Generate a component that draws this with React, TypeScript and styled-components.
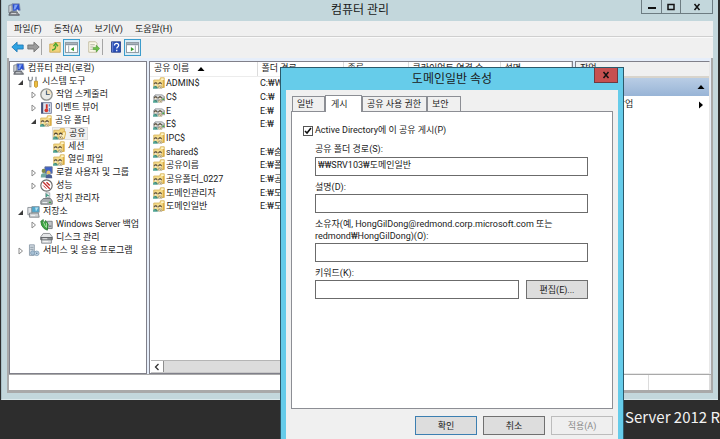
import React, { ReactNode, useState } from "react";
import styled, { createGlobalStyle, css } from "styled-components";

const GlobalStyle = createGlobalStyle`
  * { box-sizing: border-box; }
  body {
    margin: 0;
    background: #2d2d2d;
    color: #1a1a1a;
    font-family: Roboto, "Noto Sans CJK KR", sans-serif;
    font-size: 9px;
    line-height: 13px;
  }
  button, input { font: inherit; color: inherit; }
`;

/* ---------- desktop and main window ---------- */

const Desktop = styled.main`
  position: relative;
  display: flex;
  flex-direction: column;
  height: 100vh;
  overflow: hidden;
  background: #2d2d2d;
`;

const ConsoleWindow = styled.section`
  display: flex;
  flex-direction: column;
  flex: 1;
  margin: 0 2px 0 1px;
  padding: 0 5px 6px;
  background: #c3d7dc;
  border-left: 1px solid #a9bfc6;
  border-bottom: 1px solid #dbe9ec;
  min-height: 0;
`;

const TitleBar = styled.header`
  display: grid;
  grid-template-columns: 1fr auto 1fr;
  height: 21px;
`;

const TitleIcon = styled.div`
  padding: 3px 0 0 1px;
`;

const WindowTitle = styled.h1`
  margin: 0;
  font-size: 12px;
  font-weight: 400;
  line-height: 20px;
`;

const CaptionButtons = styled.div`
  display: flex;
  justify-self: end;
  height: 14px;
  border: 1px solid #6d7c82;
  border-top: 0;
`;

const CaptionButton = styled.button<{ $wide?: boolean }>`
  display: flex;
  align-items: center;
  justify-content: center;
  width: ${(p) => (p.$wide ? 32 : 19)}px;
  padding: 0;
  border: 0;
  background: transparent;
  & + & { border-left: 1px solid #6d7c82; }
`;

const MenuBar = styled.nav`
  display: flex;
  gap: 12px;
  height: 16px;
  padding-left: 7px;
  background: #f0f0f0;
  border-bottom: 1px solid #cfcfcf;
`;

const MenuItem = styled.button`
  padding: 0;
  border: 0;
  background: none;
  line-height: 14px;
`;

const Toolbar = styled.div`
  display: flex;
  align-items: center;
  height: 21px;
  padding: 0 0 2px 2px;
  background: #f0f0f0;
  border-top: 1px solid #fafafa;
`;

const ToolButton = styled.button<{ $active?: boolean }>`
  display: flex;
  align-items: center;
  justify-content: center;
  width: ${(p) => (p.$active ? 17 : 16)}px;
  height: ${(p) => (p.$active ? 17 : 16)}px;
  padding: 0;
  border: ${(p) => (p.$active ? "1px solid #3c9ccc" : "0")};
  background: ${(p) => (p.$active ? "#d9ecf6" : "none")};
`;

const ToolSeparator = styled.span<{ $blank?: boolean }>`
  width: 1px;
  height: 16px;
  margin-right: 5px;
  background: ${(p) => (p.$blank ? "none" : "#a5a5a5")};
`;

const ClientArea = styled.div`
  display: flex;
  flex-direction: column;
  flex: 1;
  min-height: 0;
  padding: 0 2px 3px;
  background: #a9a9a9;
`;

const Panes = styled.div`
  display: grid;
  grid-template-columns: 138px 1fr 135px;
  gap: 2px;
  flex: 1;
  min-height: 0;
  padding: 3px 1px 0 0;
  background: #e6eefa;
`;

const paneBox = css`
  min-width: 0;
  min-height: 0;
  overflow: hidden;
  background: #fff;
  border: 1px solid #80808a;
`;

const TreePane = styled.ul`
  ${paneBox}
  margin: 0;
  padding: 0;
  list-style: none;
`;

const TreeRow = styled.li<{ $level: number }>`
  display: flex;
  align-items: center;
  height: 13px;
  padding-left: ${(p) => (p.$level === 0 ? 2 : p.$level * 13 - 7)}px;
  white-space: nowrap;
`;

const Expander = styled.span`
  display: flex;
  justify-content: center;
  width: 8px;
  margin-right: 2px;
`;

const TreeItem = styled.span<{ $selected?: boolean }>`
  display: flex;
  align-items: center;
  gap: 3px;
  height: 13px;
  padding: 0 2px 0 1px;
  background: ${(p) => (p.$selected ? "#f0f0f0" : "none")};
  box-shadow: ${(p) => (p.$selected ? "inset 0 0 0 1px #dedede" : "none")};
`;

const ListPane = styled.div`
  ${paneBox}
  display: flex;
  flex-direction: column;
  justify-content: space-between;
`;

const ShareTable = styled.table`
  table-layout: fixed;
  width: 100%;
  border-collapse: collapse;
  white-space: nowrap;

  th {
    height: 14px;
    padding: 0 0 0 4px;
    font-weight: 400;
    text-align: left;
    overflow: hidden;
    border-right: 1px solid #dcdcdc;
    border-bottom: 1px solid #ececec;
  }
  td {
    height: 14px;
    padding: 0 0 0 3px;
    overflow: hidden;
  }
  tbody tr:nth-child(3n) td { height: 13px; line-height: 12px; }
`;

const Column = styled.col<{ $width?: number }>`
  width: ${(p) => (p.$width ? `${p.$width}px` : "auto")};
`;

const Inline = styled.span<{ $gap: number }>`
  display: flex;
  align-items: center;
  gap: ${(p) => p.$gap}px;
`;

const ScrollBar = styled.div`
  display: flex;
  height: 13px;
  margin-left: 1px;
  background: #dcdcdc;
  border-top: 1px solid #b5b5b5;
  border-bottom: 1px solid #c8c8c8;
`;

const ScrollButton = styled.button`
  display: flex;
  align-items: center;
  justify-content: center;
  width: 13px;
  padding: 0;
  background: #fff;
  border: 0;
  border-right: 1px solid #8d8d8d;
`;

const ActionPane = styled.aside`
  ${paneBox}
  border-right-color: #e8e8e8;
  border-bottom-color: #e8e8e8;
`;

const ActionHeader = styled.h2`
  height: 16px;
  margin: 0;
  padding-left: 4px;
  font-size: inherit;
  font-weight: 400;
  background: #f0f0f0;
  border-bottom: 2px solid #d8d4cc;
`;

const ActionGroup = styled.div`
  display: flex;
  align-items: center;
  justify-content: space-between;
  height: 18px;
  padding: 0 4px;
  background: linear-gradient(#b9cde5, #98b4d6);
`;

const ActionLink = styled.button`
  display: flex;
  align-items: center;
  justify-content: space-between;
  width: 100%;
  height: 17px;
  padding: 0 4px 0 22px;
  border: 0;
  background: none;
`;

const StatusBar = styled.footer`
  display: grid;
  grid-template-columns: 1fr 61px 1px;
  height: 16px;
  background: #fff;
  border-top: 1px solid #a9a9a9;
  span { border-right: 1px solid #dcdcdc; }
`;

const Branding = styled.div`
  flex: none;
  display: flex;
  justify-content: flex-end;
  height: 39px;
  color: #f2f2f2;
  font-family: "Noto Sans CJK KR", sans-serif;
  font-size: 15px;
  line-height: 34px;
  white-space: nowrap;
`;

/* ---------- properties dialog ---------- */

const Dialog = styled.section`
  position: absolute;
  top: 67px;
  left: 280px;
  display: flex;
  flex-direction: column;
  width: 344px;
  padding: 0 5px 5px;
  background: #66ccea;
  border: 1px solid #2c5a6b;
`;

const DialogTitleBar = styled.header`
  display: grid;
  grid-template-columns: 24px 1fr 24px;
  height: 22px;
`;

const DialogTitle = styled.h2`
  margin: 0;
  font-size: 12px;
  font-weight: 400;
  line-height: 22px;
  text-align: center;
`;

const CloseButton = styled.button`
  display: flex;
  align-items: center;
  justify-content: center;
  height: 15px;
  padding: 0;
  background: #c75050;
  border: 1px solid #6f3a41;
  border-top: 0;
`;

const DialogBody = styled.div`
  padding: 5px 5px 4px;
  background: #f0f0f0;
  border-bottom: 1px solid #fff;
`;

const TabList = styled.div`
  display: flex;
  align-items: flex-end;
  padding-left: 1px;
`;

const Tab = styled.button<{ $width: number; $selected?: boolean }>`
  width: ${(p) => p.$width}px;
  height: ${(p) => (p.$selected ? 17 : 15)}px;
  margin-bottom: ${(p) => (p.$selected ? -1 : 0)}px;
  padding: 0 0 0 ${(p) => (p.$selected ? 5 : 4)}px;
  text-align: left;
  white-space: nowrap;
  line-height: 13px;
  background: ${(p) => (p.$selected ? "#fff" : "#f0f0f0")};
  border: 1px solid #8c8e94;
  border-bottom: 0;
`;

const TabPage = styled.form`
  display: flex;
  flex-direction: column;
  height: 298px;
  padding: 12px 24px 0 11px;
  background: #fff;
  border: 1px solid #8c8e94;
`;

const CheckLabel = styled.label`
  display: flex;
  align-items: center;
  gap: 2px;
  height: 13px;
`;

const CheckBox = styled.input`
  appearance: none;
  width: 10px;
  height: 10px;
  margin: 0;
  border: 1px solid #555;
  background: #fff;
  &:checked {
    background: #fff
      url("data:image/svg+xml,%3Csvg xmlns='http://www.w3.org/2000/svg' viewBox='0 0 8 8'%3E%3Cpath d='M1 4l2 2 4-5' fill='none' stroke='%23111' stroke-width='1.6'/%3E%3C/svg%3E");
  }
`;

const Fields = styled.div`
  display: flex;
  flex-direction: column;
  padding: 6px 0 0 12px;
`;

const FieldLabel = styled.label<{ $first?: boolean }>`
  margin-top: ${(p) => (p.$first ? 0 : 5)}px;
  margin-bottom: ${(p) => (p.$first ? 2 : 1)}px;
  line-height: 12px;
  white-space: pre-line;
`;

const TextBox = styled.input`
  flex: 1;
  width: 100%;
  min-width: 0;
  min-height: 19px;
  padding: 0 2px 3px;
  background: #fff;
  border: 1px solid #6b6b6b;
`;

const FieldRow = styled.div`
  display: flex;
  gap: 7px;
  align-items: flex-end;
`;

const PushButton = styled.button<{ $default?: boolean }>`
  width: 62px;
  height: 19px;
  padding: 0;
  line-height: 14px;
  background: #dddddd;
  border: 1px solid ${(p) => (p.$default ? "#3c7fb1" : "#707070")};
  &:disabled {
    color: #8a8a8a;
    background: #efefef;
    border-color: #bcbcbc;
  }
`;

const DialogActions = styled.div`
  display: flex;
  justify-content: flex-end;
  gap: 6px;
  padding-top: 7px;
`;

/* ---------- icons ---------- */

const Svg = ({ size = 12, children }: { size?: number; children: ReactNode }) => (
  <svg width={size} height={size} viewBox="0 0 16 16" aria-hidden="true">
    {children}
  </svg>
);

const people = (
  <>
    <path d="M0 15.500c0-3 1-4 3-4s3 1 3.500 4z" fill="#4fa596" />
    <path d="M7 15c0-2.500.5-3.500 2.500-3.500S12 12.500 12 15z" fill="#f4e6bd" stroke="#7d6d48" strokeWidth=".6" />
    <path d="M1.500 9.500a2 2.200 0 0 1 4.200 0M7.300 9.500a2 2.200 0 0 1 4.200 0" fill="#4d4130" stroke="#4d4130" strokeWidth=".8" />
    <circle cx="3.6" cy="10" r="1.4" fill="#f6ead0" />
    <circle cx="9.4" cy="10" r="1.4" fill="#f6ead0" />
    <path d="M3.500 12.500l1 1.500M9 12.500l1 1.500" stroke="#4d4130" />
  </>
);

const SharedFolderIcon = () => (
  <Svg>
    <path d="M1 4h8l1-3h5v13H1z" fill="#f5dc8c" stroke="#d3ad52" />
    <path d="M11 2h3v2h-3z" fill="#fff6d2" />
    <path d="M14 4v10" stroke="#dcae45" strokeWidth="2" />
    {people}
  </Svg>
);

const OpenSharedFolderIcon = () => (
  <Svg size={13}>
    <path d="M1 4h7l1-2h5v12H1z" fill="#f3d47c" stroke="#d3ad52" />
    <path d="M9 14l3-8h4l-2 8z" fill="#fdeeb8" stroke="#d7ab48" />
    {people}
  </Svg>
);

const SharedDriveIcon = () => (
  <Svg>
    <path d="M1 7l2-2h9l4 3v5H1z" fill="#b3b7b9" stroke="#8b8f92" strokeWidth=".8" />
    <path d="M4 6h8l2 2H3z" fill="#dfe2e3" />
    <rect x="12.5" y="10" width="2.5" height="2" fill="#46a83a" />
    {people}
  </Svg>
);

const ComputerIcon = ({ size = 12 }: { size?: number }) => (
  <Svg size={size}>
    <path d="M1 3l4-1v10H1z" fill="#c9cdd2" stroke="#737a83" />
    <path d="M5 1h9l1 8-9 1z" fill="#2b4fd0" stroke="#8793a6" />
    <path d="M8 2h4l-3 6H7z" fill="#7fa2f3" />
    <path d="M3 11h9l2 4H1z" fill="#8c8f95" stroke="#4c5057" />
    <path d="M11 8l3 5" stroke="#e8eaed" strokeWidth="1.5" />
    <path d="M4 13h6" stroke="#e6e8ea" />
  </Svg>
);

const ToolsIcon = () => (
  <Svg>
    <path d="M2 1v4l2.500 2L7 5V1" fill="none" stroke="#7c8288" strokeWidth="1.5" />
    <path d="M4.500 6v9" stroke="#7c8288" strokeWidth="2.5" />
    <path d="M4.500 7v7" stroke="#d9dcde" />
    <path d="M12 1v6" stroke="#8f959a" strokeWidth="1.8" />
    <path d="M10 7h4v7l-1 1h-2l-1-1z" fill="#edbf3f" stroke="#b98a1f" />
  </Svg>
);

const ClockIcon = () => (
  <Svg size={13}>
    <circle cx="8" cy="8" r="7" fill="#e9ebe8" stroke="#8f918d" strokeWidth="1.6" />
    <path d="M8 8V2a6 6 0 0 1 6 6z" fill="#f3e3bd" />
    <path d="M8 3v5h4" fill="none" stroke="#53687e" strokeWidth="1.5" />
  </Svg>
);

const EventIcon = () => (
  <Svg>
    <rect x="2" y="1" width="13" height="14" fill="#dfe3ee" stroke="#4d587d" />
    <path d="M3 1v14" stroke="#46507a" strokeWidth="2.5" />
    <path d="M9 3v6" stroke="#cf2f27" strokeWidth="2.5" />
    <circle cx="8.5" cy="11" r="2.5" fill="#d83a2f" />
    <path d="M12.500 3v3M12.500 8v5" stroke="#5e7fc4" strokeWidth="1.5" />
  </Svg>
);

const UsersIcon = () => (
  <Svg size={13}>
    <path d="M6 1h9v8H6z" fill="#3f62c9" stroke="#68748c" />
    <circle cx="4.5" cy="6" r="2.5" fill="#7c8a4e" />
    <path d="M1 14c0-4 1-5 4-5s4 1 4 5z" fill="#6fa8a0" />
    <circle cx="10.5" cy="8" r="2.5" fill="#e6bf63" />
    <path d="M7 15c0-4 1-5 4-5s4 1 4 5z" fill="#4a5f94" />
  </Svg>
);

const PerformanceIcon = () => (
  <Svg size={13}>
    <circle cx="8" cy="8" r="7" fill="#fff" stroke="#6c6c6c" strokeWidth="1.4" />
    <path d="M4 4l8 8M8 4l4 4" stroke="#c42a2a" strokeWidth="1.7" />
    <path d="M4 8l4 4" stroke="#c42a2a" strokeWidth="1.2" />
  </Svg>
);

const DeviceIcon = () => (
  <Svg size={13}>
    <path d="M7 1h5v6H7z" fill="#eef1f2" stroke="#9aa0a5" />
    <path d="M8 6V3l3 2" fill="none" stroke="#4da08b" strokeWidth="1.5" />
    <path d="M1 11l3-3h9l2 3v4H1z" fill="#a8adb1" stroke="#64696e" />
    <path d="M3 13h6" stroke="#eceff1" strokeWidth="1.3" />
    <rect x="11" y="12" width="2.5" height="1.5" fill="#3ca33a" />
  </Svg>
);

const StorageIcon = () => (
  <Svg size={13}>
    <path d="M1 3h5v9H1z" fill="#e2e5e7" stroke="#7f868c" />
    <path d="M6 2h9v7H6z" fill="#4fa9cf" stroke="#7c8c96" />
    <path d="M10 3h4l-3 5z" fill="#b7e2f2" />
    <path d="M3 10h11l1 5H3z" fill="#cfd3d6" stroke="#72787d" />
    <path d="M5 13h5" stroke="#f6f6f6" />
  </Svg>
);

const BackupIcon = () => (
  <Svg size={13}>
    <path d="M9 4h6v9H9z" fill="#c0c5c8" stroke="#6b7176" />
    <path d="M1 4l3-2v5l3-4 3 5-1 7-4-2-3-4z" fill="#3fa845" stroke="#25702c" />
    <path d="M4 5l3 6M8 6v6" stroke="#b9e8b4" />
    <path d="M11 10h3" stroke="#4a4f53" />
  </Svg>
);

const DiskIcon = () => (
  <Svg size={13}>
    <path d="M1 7l3-4h8l3 4v2H1z" fill="#e4e6e7" stroke="#7c8084" />
    <path d="M1 8h14v3H1z" fill="#8a8e91" stroke="#55595d" />
    <path d="M2 11h12v4H2z" fill="#dfe1e3" stroke="#7a7e82" />
    <path d="M4 13h6M3 9.500h6" stroke="#fafafa" />
  </Svg>
);

const ServicesIcon = () => (
  <Svg size={13}>
    <path d="M3 1h6v13H3z" fill="#d5dde4" stroke="#8493a1" />
    <path d="M4 4h4M4 6.500h4" stroke="#7b8a98" />
    <circle cx="7" cy="11" r="2.6" fill="#a6bfd4" stroke="#7f9bb3" />
    <circle cx="12" cy="11.5" r="2.8" fill="#c3d6e6" stroke="#7f9bb3" />
    <circle cx="12" cy="11.5" r="1" fill="#5f7f9b" />
  </Svg>
);

const ArrowIcon = ({ forward }: { forward?: boolean }) => (
  <svg width="13" height="12" viewBox="0 0 16 14" aria-hidden="true">
    <path
      d={forward ? "M15 7L8.500 1v3.500H1v5h7.500V13z" : "M1 7l6.500-6v3.500H15v5H7.500V13z"}
      fill={forward ? "#9b9b9b" : "#2ea3e3"}
      stroke={forward ? "#6d6d6d" : "#1f76b3"}
    />
  </svg>
);

const FolderUpIcon = () => (
  <Svg>
    <path d="M1 4h5l1-2h8v13H1z" fill="#f0d27c" stroke="#c6a04a" />
    <path d="M4 12c3 0 5-2 5-6M6 7l3-4 3 4" fill="none" stroke="#43a52c" strokeWidth="1.8" />
  </Svg>
);

const PaneIcon = ({ right }: { right?: boolean }) => (
  <svg width="13" height="11" viewBox="0 0 16 13" aria-hidden="true">
    <rect x=".5" y=".5" width="15" height="12" fill="#fff" stroke="#7e8890" />
    <path d="M1 2.500h14" stroke="#8c98a3" strokeWidth="2.4" />
    <path d={right ? "M11.500 4v9" : "M4.500 4v9"} stroke="#8c98a3" />
    <path d={right ? "M6 6l4 2.500L6 11z" : "M11 6L7 8.500l4 2.500z"} fill="#3c9a2e" />
  </svg>
);

const ExportIcon = () => (
  <Svg>
    <path d="M1 1h9l2 2v12H1z" fill="#fbf9ea" stroke="#b5ad8c" />
    <path d="M3 5h6M3 8h4M3 11h4" stroke="#9b9b8c" />
    <path d="M7 8.500h4V5.500l4.500 4.500-4.500 4.500v-3H7z" fill="#6cc04a" stroke="#3f8f2a" strokeWidth=".7" />
  </Svg>
);

const HelpIcon = () => (
  <Svg>
    <path d="M2 1h12v14H2z" fill="#2c50b8" stroke="#1a337f" />
    <path d="M3.500 1v14" stroke="#7f98e0" />
    <path d="M6 6c0-4 6-3.500 5.500 0C11.300 8 9 8 9 10M9 11.500v2" fill="none" stroke="#fff" strokeWidth="1.7" />
  </Svg>
);

const ExpanderGlyph = ({ open }: { open: boolean }) => (
  <svg width="7" height="8" viewBox="0 0 7 8" aria-hidden="true">
    {open ? (
      <path d="M6 2v5H1z" fill="#3b3b3b" />
    ) : (
      <path d="M2 1l3.500 3L2 7z" fill="#fff" stroke="#8a8a8a" />
    )}
  </svg>
);

const Triangle = ({ up }: { up?: boolean }) => (
  <svg width="8" height="8" viewBox="0 0 8 8" aria-hidden="true">
    <path d={up ? "M4 2l3.500 4h-7z" : "M2 .5L6 4 2 7.500z"} fill="#000" />
  </svg>
);

const CloseGlyph = () => (
  <svg width="8" height="8" viewBox="0 0 8 8" aria-hidden="true">
    <path d="M1.500 1l5 6M6.500 1l-5 6" stroke="#111" strokeWidth="1.5" />
  </svg>
);

/* ---------- data ---------- */

type Node = { level: number; open?: boolean; label: string; icon: ReactNode; selected?: boolean };

const tree: Node[] = [
  { level: 0, label: "컴퓨터 관리(로컬)", icon: <ComputerIcon /> },
  { level: 1, open: true, label: "시스템 도구", icon: <ToolsIcon /> },
  { level: 2, open: false, label: "작업 스케줄러", icon: <ClockIcon /> },
  { level: 2, open: false, label: "이벤트 뷰어", icon: <EventIcon /> },
  { level: 2, open: true, label: "공유 폴더", icon: <SharedFolderIcon /> },
  { level: 3, label: "공유", icon: <OpenSharedFolderIcon />, selected: true },
  { level: 3, label: "세션", icon: <SharedFolderIcon /> },
  { level: 3, label: "열린 파일", icon: <SharedFolderIcon /> },
  { level: 2, open: false, label: "로컬 사용자 및 그룹", icon: <UsersIcon /> },
  { level: 2, open: false, label: "성능", icon: <PerformanceIcon /> },
  { level: 2, label: "장치 관리자", icon: <DeviceIcon /> },
  { level: 1, open: true, label: "저장소", icon: <StorageIcon /> },
  { level: 2, open: false, label: "Windows Server 백업", icon: <BackupIcon /> },
  { level: 2, label: "디스크 관리", icon: <DiskIcon /> },
  { level: 1, open: false, label: "서비스 및 응용 프로그램", icon: <ServicesIcon /> },
];

const shares = [
  { name: "ADMIN$", path: "C:₩Windows" },
  { name: "C$", path: "C:₩", drive: true },
  { name: "E", path: "E:₩", drive: true },
  { name: "E$", path: "E:₩", drive: true },
  { name: "IPC$", path: "" },
  { name: "shared$", path: "E:₩숨김" },
  { name: "공유이름", path: "E:₩폴더" },
  { name: "공유폴더_0227", path: "E:₩공유폴더" },
  { name: "도메인관리자", path: "E:₩도메인관리자" },
  { name: "도메인일반", path: "E:₩도메인일반" },
];

export default function App() {
  const [published, setPublished] = useState(true);
  return (
    <>
      <GlobalStyle />
      <Desktop>
        <ConsoleWindow>
          <TitleBar>
            <TitleIcon><ComputerIcon size={13} /></TitleIcon>
            <WindowTitle>컴퓨터 관리</WindowTitle>
            <CaptionButtons>
              <CaptionButton aria-label="최소화">
                <svg width="8" height="8" viewBox="0 0 8 8"><path d="M0 5h8" stroke="#111" strokeWidth="2" /></svg>
              </CaptionButton>
              <CaptionButton aria-label="최대화">
                <svg width="8" height="8" viewBox="0 0 8 8"><path d="M1 1.500h6v5H1z" fill="none" stroke="#111" strokeWidth="1.5" /></svg>
              </CaptionButton>
              <CaptionButton $wide aria-label="닫기"><CloseGlyph /></CaptionButton>
            </CaptionButtons>
          </TitleBar>
          <MenuBar>
            {["파일(F)", "동작(A)", "보기(V)", "도움말(H)"].map((m) => <MenuItem key={m}>{m}</MenuItem>)}
          </MenuBar>
          <Toolbar>
            <ToolButton aria-label="뒤로"><ArrowIcon /></ToolButton>
            <ToolButton aria-label="앞으로"><ArrowIcon forward /></ToolButton>
            <ToolSeparator />
            <ToolButton aria-label="위로"><FolderUpIcon /></ToolButton>
            <ToolButton $active aria-label="콘솔 트리"><PaneIcon /></ToolButton>
            <ToolSeparator $blank />
            <ToolButton aria-label="내보내기"><ExportIcon /></ToolButton>
            <ToolSeparator />
            <ToolButton aria-label="도움말"><HelpIcon /></ToolButton>
            <ToolButton $active aria-label="작업 창"><PaneIcon right /></ToolButton>
          </Toolbar>
          <ClientArea>
            <Panes>
              <TreePane>
                {tree.map((n) => (
                  <TreeRow key={n.label} $level={n.level}>
                    {n.level > 0 && <Expander>{n.open !== undefined && <ExpanderGlyph open={n.open} />}</Expander>}
                    <TreeItem $selected={n.selected}>{n.icon}{n.label}</TreeItem>
                  </TreeRow>
                ))}
              </TreePane>
              <ListPane>
                <ShareTable>
                  <colgroup>
                    <Column $width={107} />
                    <Column $width={86} />
                    <Column $width={65} />
                    <Column $width={92} />
                    <Column />
                  </colgroup>
                  <thead>
                    <tr>
                      <th><Inline $gap={8}>공유 이름<Triangle up /></Inline></th>
                      <th>폴더 경로</th>
                      <th>종류</th>
                      <th>클라이언트 연결 수</th>
                      <th>설명</th>
                    </tr>
                  </thead>
                  <tbody>
                    {shares.map((s) => (
                      <tr key={s.name}>
                        <td><Inline $gap={1}>{s.drive ? <SharedDriveIcon /> : <SharedFolderIcon />}{s.name}</Inline></td>
                        <td>{s.path}</td>
                        <td /><td /><td />
                      </tr>
                    ))}
                  </tbody>
                </ShareTable>
                <ScrollBar>
                  <ScrollButton aria-label="왼쪽으로 스크롤">
                    <svg width="6" height="8" viewBox="0 0 6 8"><path d="M4.500 1l-3 3 3 3" fill="none" stroke="#333" strokeWidth="1.3" /></svg>
                  </ScrollButton>
                </ScrollBar>
              </ListPane>
              <ActionPane>
                <ActionHeader>작업</ActionHeader>
                <ActionGroup><span>공유</span><Triangle up /></ActionGroup>
                <ActionLink>추가 작업<Triangle /></ActionLink>
              </ActionPane>
            </Panes>
            <StatusBar><span /><span /><span /></StatusBar>
          </ClientArea>
        </ConsoleWindow>
        <Branding>Server 2012 R</Branding>

        <Dialog role="dialog" aria-labelledby="dialog-title">
          <DialogTitleBar>
            <span />
            <DialogTitle id="dialog-title">도메인일반 속성</DialogTitle>
            <CloseButton aria-label="닫기"><CloseGlyph /></CloseButton>
          </DialogTitleBar>
          <DialogBody>
            <TabList role="tablist">
              <Tab role="tab" $width={33}>일반</Tab>
              <Tab role="tab" aria-selected $width={37} $selected>게시</Tab>
              <Tab role="tab" $width={65}>공유 사용 권한</Tab>
              <Tab role="tab" $width={34}>보안</Tab>
            </TabList>
            <TabPage>
              <CheckLabel>
                <CheckBox type="checkbox" checked={published} onChange={() => setPublished(!published)} />
                Active Directory에 이 공유 게시(P)
              </CheckLabel>
              <Fields>
                <FieldLabel htmlFor="path" $first>공유 폴더 경로(S):</FieldLabel>
                <TextBox id="path" defaultValue="₩₩SRV103₩도메인일반" />
                <FieldLabel htmlFor="desc">설명(D):</FieldLabel>
                <TextBox id="desc" />
                <FieldLabel htmlFor="owner">
                  {"소유자(예, HongGilDong@redmond.corp.microsoft.com 또는\nredmond₩HongGilDong)(O):"}
                </FieldLabel>
                <TextBox id="owner" />
                <FieldLabel htmlFor="keyword">키워드(K):</FieldLabel>
                <FieldRow>
                  <TextBox id="keyword" />
                  <PushButton type="button">편집(E)...</PushButton>
                </FieldRow>
              </Fields>
            </TabPage>
            <DialogActions>
              <PushButton $default>확인</PushButton>
              <PushButton>취소</PushButton>
              <PushButton disabled>적용(A)</PushButton>
            </DialogActions>
          </DialogBody>
        </Dialog>
      </Desktop>
    </>
  );
}
